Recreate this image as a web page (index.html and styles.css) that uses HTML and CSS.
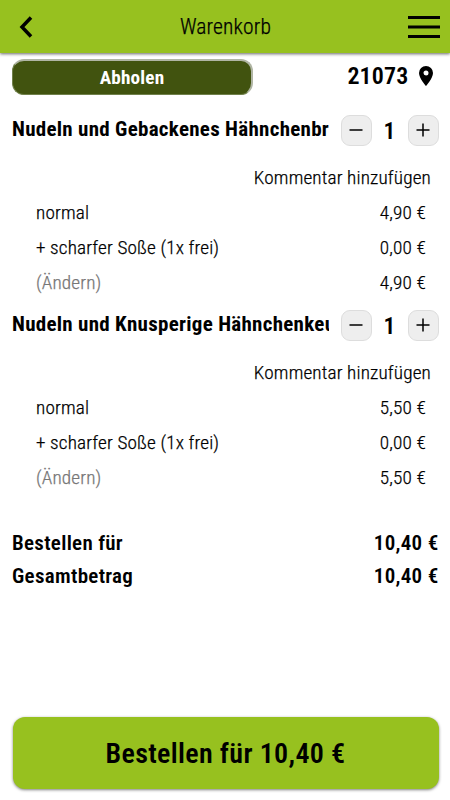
FILE: index.html
```html
<!DOCTYPE html>
<html lang="de">
<head>
<meta charset="utf-8">
<title>Warenkorb</title>
<link rel="stylesheet" href="styles.css">
</head>
<body>
<header class="bar">
  <svg class="back" viewBox="0 0 14 22"><path d="M12 1.5 3 11l9 9.500" fill="none" stroke="#000" stroke-width="3.500"/></svg>
  <h1 class="heading"><span class="t">Warenkorb</span></h1>
  <svg class="menu" viewBox="0 0 32 22"><path d="M0 1.500h32M0 11h32M0 20.500h32" stroke="#000" stroke-width="3"/></svg>
</header>
<main class="cart">
  <section class="delivery">
    <button class="pickup"><span class="t">Abholen</span></button>
    <div class="zip"><span class="t">21073</span><svg class="pin" viewBox="0 0 14 20"><path fill-rule="evenodd" d="M7 0a7 7 0 0 0-7 7c0 5.200 7 13 7 13s7-7.800 7-13a7 7 0 0 0-7-7zm0 4.500a2.500 2.500 0 1 1 0 5 2.500 2.500 0 0 1 0-5z"/></svg></div>
  </section>
  <section class="item">
    <div class="item-head">
      <h2 class="name"><span class="t">Nudeln und Gebackenes Hähnchenbr</span></h2>
      <button class="step"><svg viewBox="0 0 14 14"><path d="M.5 7h13"/></svg></button>
      <span class="count">1</span>
      <button class="step"><svg viewBox="0 0 14 14"><path d="M.5 7h13M7 .5v13"/></svg></button>
    </div>
    <div class="comment"><span class="t">Kommentar hinzufügen</span></div>
    <div class="line"><span class="t">normal</span><span class="t">4,90 €</span></div>
    <div class="line"><span class="t">+ scharfer Soße (1x frei)</span><span class="t">0,00 €</span></div>
    <div class="line"><span class="t muted">(Ändern)</span><span class="t">4,90 €</span></div>
  </section>
  <section class="item">
    <div class="item-head">
      <h2 class="name"><span class="t">Nudeln und Knusperige Hähnchenkeu</span></h2>
      <button class="step"><svg viewBox="0 0 14 14"><path d="M.5 7h13"/></svg></button>
      <span class="count">1</span>
      <button class="step"><svg viewBox="0 0 14 14"><path d="M.5 7h13M7 .5v13"/></svg></button>
    </div>
    <div class="comment"><span class="t">Kommentar hinzufügen</span></div>
    <div class="line"><span class="t">normal</span><span class="t">5,50 €</span></div>
    <div class="line"><span class="t">+ scharfer Soße (1x frei)</span><span class="t">0,00 €</span></div>
    <div class="line"><span class="t muted">(Ändern)</span><span class="t">5,50 €</span></div>
  </section>
  <section class="totals">
    <div class="total"><span class="t">Bestellen für</span><span class="t">10,40 €</span></div>
    <div class="total"><span class="t">Gesamtbetrag</span><span class="t">10,40 €</span></div>
  </section>
</main>
<button class="order"><span class="t">Bestellen für 10,40 €</span></button>
</body>
</html>
```
FILE: styles.css
```css
* { box-sizing: border-box; }
body {
  margin: 0; height: 800px; display: flex; flex-direction: column;
  background: #fff; color: #000; overflow: hidden;
  font-family: "Roboto Condensed", Roboto, "Liberation Sans", sans-serif;
  font-stretch: 75%; font-size: 19.200px; font-weight: 300; letter-spacing: .15px;
}
h1, h2 { margin: 0; font: inherit; font-stretch: 75%; }
button { font: inherit; font-stretch: 75%; letter-spacing: inherit; color: inherit; padding: 0; border: 0; }
.t { white-space: nowrap; }
.bar {
  height: 53px; flex: none; display: flex; align-items: center; justify-content: space-between;
  padding: 0 10px 0 19px; background: #97c11f; box-shadow: 0 1px 3px rgba(0,0,0,.6);
}
.back { width: 14px; height: 22px; margin-right: 10px; }
.heading { font-size: 21.500px; padding-bottom: 1px; }
.heading, .comment, .line { -webkit-text-stroke: .25px; }
.menu { width: 32px; height: 22px; }
.cart { flex: 1; padding: 6px 11.500px 0 12px; }
.delivery { display: flex; justify-content: space-between; height: 36px; }
.pickup {
  width: 241px; height: 36px; border-radius: 12px; background: #41530f; color: #fff;
  font-weight: 700; border: 1px solid #70804a; border-top: 2px solid #b0b5a4; border-right: 2px solid #b0b5a4;
}
.zip { display: flex; align-items: center; gap: 11px; padding-right: 6px; font-size: 24px; font-weight: 600; }
.zip .t { padding-bottom: 2px; margin-right: -1px; }
.pin { width: 14px; height: 20px; margin-bottom: 2px; }
.item { height: 195.200px; padding-top: 20px; }
.item-head { display: flex; align-items: center; height: 31px; }
.name { width: 317.500px; margin-right: 11.500px; overflow: hidden; font-size: 21px; letter-spacing: .28px; font-weight: 700; padding-bottom: 4px; }
.step {
  width: 31px; height: 31px; flex: none; display: grid; place-items: center;
  background: #eee; border: 1px solid #ddd; border-radius: 9px;
}
.step svg { width: 14px; height: 14px; margin-bottom: 2px; fill: none; stroke: #000; stroke-width: 1.500; }
.count { width: 36px; text-align: center; font-size: 23.500px; font-weight: 600; }
.comment { display: flex; justify-content: flex-end; align-items: center; height: 35px; margin-top: 13.500px; padding-right: 7.500px; }
.line { display: flex; justify-content: space-between; align-items: center; height: 35.200px; padding: 0 12.500px 0 24px; }
.muted { color: #777; }
.totals { padding-top: 41px; font-size: 21px; letter-spacing: .3px; font-weight: 600; }
.total { display: flex; justify-content: space-between; align-items: center; height: 33px; }
.order {
  flex: none; height: 72px; margin: 0 11.500px 11px 12.500px; border-radius: 12px; background: #97c11f;
  box-shadow: 0 1px 3px rgba(0,0,0,.5); font-size: 28px; letter-spacing: .35px; font-weight: 600;
}
```
